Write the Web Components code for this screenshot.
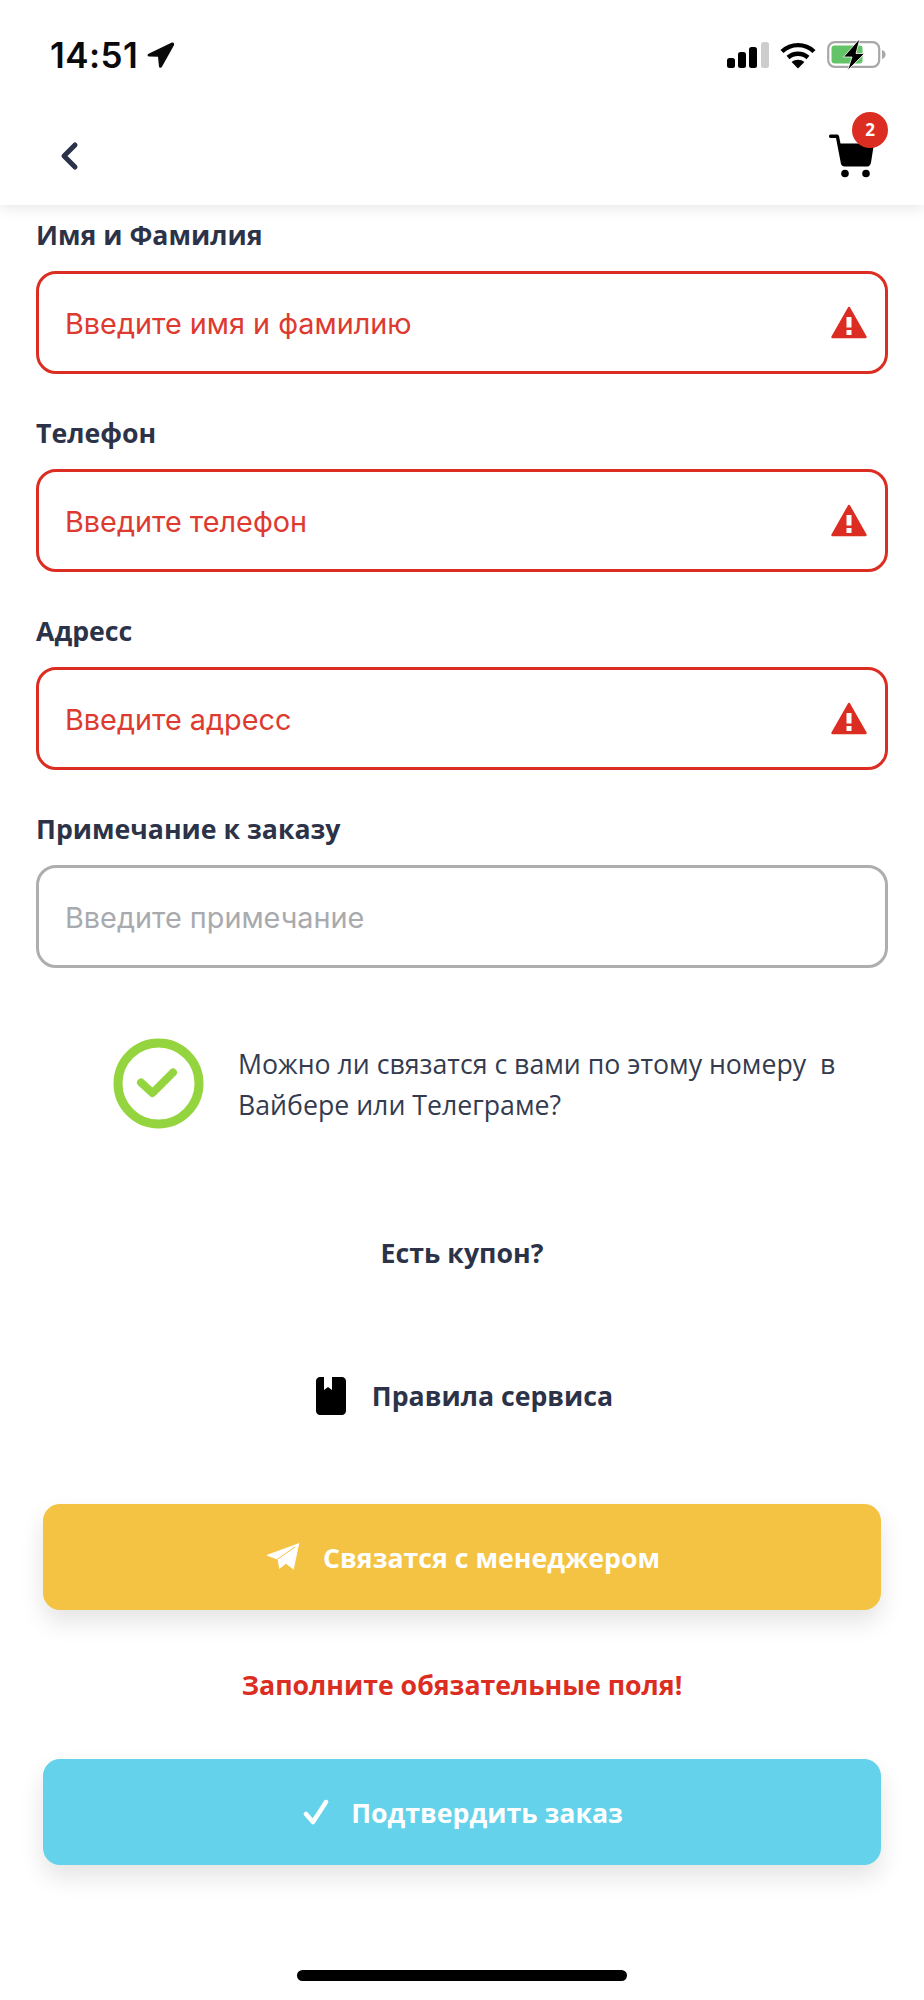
<!DOCTYPE html>
<html lang="ru">
<head>
<meta charset="utf-8">
<title>Заказ</title>
<style>
  html, body { margin: 0; background: #fff; }
  body { font-family: "Open Sans", sans-serif; color: #2c3349; }
  main { display: block; padding: 12px 36px 0; }
</style>
</head>
<body>
<app-header count="2"></app-header>
<main>
  <form-field label="Имя и Фамилия" text="Введите имя и фамилию" error></form-field>
  <form-field label="Телефон" text="Введите телефон" error></form-field>
  <form-field label="Адресс" text="Введите адресс" error></form-field>
  <form-field label="Примечание к заказу" text="Введите примечание"></form-field>
  <consent-row>Можно ли связатся с вами по этому номеру&nbsp; в Вайбере или Телеграме?</consent-row>
  <link-row class="coupon">Есть купон?</link-row>
  <link-row class="rules" icon>Правила сервиса</link-row>
  <action-button class="first" color="#f4c344" icon="plane" gap="23">Связатся с менеджером</action-button>
  <form-error>Заполните обязательные поля!</form-error>
  <action-button color="#63d2ea" icon="check" gap="22">Подтвердить заказ</action-button>
</main>
<home-bar></home-bar>
<script>
class AppHeader extends HTMLElement {
  connectedCallback() {
    this.attachShadow({ mode: 'open' });
    this.shadowRoot.innerHTML = `
      <style>
        :host {
          display: block;
          height: 205px;
          background: #fff;
          box-shadow: 0 2px 14px rgba(0, 0, 0, .11);
          position: relative;
          z-index: 1;
        }
        .status {
          height: 110px;
          padding: 0 37px 0 50px;
          display: flex;
          align-items: center;
          justify-content: space-between;
        }
        .time {
          display: flex;
          align-items: center;
          gap: 8px;
          font: 600 35px Inter, sans-serif;
          color: #0a0a0a;
          letter-spacing: .4px;
        }
        .sys { display: flex; align-items: center; gap: 11px; }
        .nav {
          height: 92px;
          padding: 0 50px 0 60px;
          display: flex;
          align-items: center;
          justify-content: space-between;
        }
        .cart { position: relative; width: 46px; height: 46px; margin-top: -3px; }
        .badge {
          position: absolute;
          top: -20px;
          right: -14px;
          width: 36px;
          height: 36px;
          border-radius: 50%;
          background: #dc2d22;
          color: #fff;
          font: 700 17px/36px "Open Sans", sans-serif;
          text-align: center;
        }
        svg { display: block; overflow: visible; }
      </style>
      <div class="status">
        <div class="time">14:51
          <svg width="29" height="29" viewBox="0 0 28 28"><path d="M25 1.500 2.500 12.200c-1.600.8-1.200 2.700.5 2.800l8.600.3.9 9c.2 1.700 2.200 2 2.900.5L27 4c.7-1.600-.5-3.200-2-2.500z" fill="#0a0a0a"/></svg>
        </div>
        <div class="sys">
          <svg width="42" height="27" viewBox="0 0 42 27">
            <rect x="0" y="16" width="8" height="10" rx="2.500" fill="#000"/>
            <rect x="11" y="10" width="8" height="16" rx="2.500" fill="#000"/>
            <rect x="22" y="5" width="8" height="21" rx="2.500" fill="#000"/>
            <rect x="34" y="0" width="8" height="26" rx="2.500" fill="#cdcdcd"/>
          </svg>
          <svg width="36" height="27" viewBox="0 0 36 27" fill="none" stroke="#000" stroke-width="4.400">
            <path d="M2 9.500C11 1 25 1 34 9.500"/>
            <path d="M8 15.500c5.800-5 14.200-5 20 0"/>
            <path d="M18 26.500 11.600 20c3.600-3 9.200-3 12.800 0z" fill="#000" stroke="none"/>
          </svg>
          <svg width="60" height="30" viewBox="0 0 60 30">
            <rect x="1.200" y="2.200" width="51" height="24.600" rx="6.500" fill="none" stroke="#a8a8a8" stroke-width="2.200"/>
            <path d="M55 10c2.500.5 3.500 2.500 3.500 4.500S57.500 18.500 55 19z" fill="#a8a8a8"/>
            <rect x="4.500" y="5.500" width="31" height="18" rx="3" fill="#62c467"/>
            <path d="M31.500 0 16.500 17H25L20.500 30.500 37.500 13.500H29L32.500 0z" fill="#000" stroke="#fff" stroke-width=".8"/>
          </svg>
        </div>
      </div>
      <div class="nav">
        <svg width="18" height="28" viewBox="0 0 18 28"><path d="M15 3 4 14l11 11" fill="none" stroke="#2c3349" stroke-width="5" stroke-linecap="round" stroke-linejoin="round"/></svg>
        <div class="cart">
          <svg width="46" height="46" viewBox="0 0 46 46">
            <path d="M2.500 2.500h6.500c1 0 1.700.6 2 1.500l1.500 7.500H46l-3 19c-.3 2.200-1.700 4-3.600 4H16.500c-1.800 0-3.200-1.200-3.600-3L8 6H2.500c-2 0-2-3.500 0-3.500z" fill="#000"/>
            <circle cx="17" cy="41.500" r="3.800" fill="#000"/>
            <circle cx="38" cy="41.500" r="3.800" fill="#000"/>
          </svg>
          <div class="badge">${this.getAttribute('count')}</div>
        </div>
      </div>`;
  }
}
customElements.define('app-header', AppHeader);

class FormField extends HTMLElement {
  connectedCallback() {
    this.attachShadow({ mode: 'open' });
    const error = this.hasAttribute('error');
    this.shadowRoot.innerHTML = `
      <style>
        :host { display: block; margin-bottom: 41px; }
        .label {
          font-size: 26.700px;
          line-height: 36px;
          font-weight: 700;
          height: 36px;
          margin-bottom: 18px;
        }
        .box {
          height: 103px;
          box-sizing: border-box;
          border: 3px solid ${error ? '#dc2d22' : '#aeaeae'};
          border-radius: 20px;
          padding: 0 18px 0 26px;
          display: flex;
          align-items: center;
          justify-content: space-between;
          font-family: Inter, sans-serif;
          font-size: 28.800px;
          color: ${error ? '#dd3a30' : '#a9aaae'};
        }
        span { position: relative; top: 1px; }
        svg { display: block; }
      </style>
      <div class="label">${this.getAttribute('label')}</div>
      <div class="box">
        <span>${this.getAttribute('text')}</span>
        ${error ? `<svg width="36" height="33" viewBox="0 0 36 33">
          <path d="M18 2 34.500 31H1.500z" fill="#dc2d22" stroke="#dc2d22" stroke-width="2.500" stroke-linejoin="round"/>
          <rect x="15.500" y="11" width="5" height="10.500" fill="#fff"/>
          <rect x="15.500" y="24" width="5" height="5" fill="#fff"/>
        </svg>` : ''}
      </div>`;
  }
}
customElements.define('form-field', FormField);

class ConsentRow extends HTMLElement {
  connectedCallback() {
    this.attachShadow({ mode: 'open' });
    this.shadowRoot.innerHTML = `
      <style>
        :host {
          display: flex;
          align-items: center;
          gap: 34px;
          margin: 70px 0 0 77px;
          font-size: 26.700px;
          line-height: 41px;
          color: #343b4f;
        }
        svg { flex: none; display: block; }
        .txt { width: 620px; }
      </style>
      <svg width="91" height="91" viewBox="0 0 91 91" fill="none">
        <circle cx="45.500" cy="45.500" r="40.500" stroke="#94d53f" stroke-width="9"/>
        <path d="M28 44.500 39.500 55 60 34.500" stroke="#94d53f" stroke-width="8" stroke-linecap="round" stroke-linejoin="round"/>
      </svg>
      <div class="txt"><slot></slot></div>`;
  }
}
customElements.define('consent-row', ConsentRow);

class LinkRow extends HTMLElement {
  connectedCallback() {
    this.attachShadow({ mode: 'open' });
    const icon = this.hasAttribute('icon');
    this.shadowRoot.innerHTML = `
      <style>
        :host {
          display: flex;
          justify-content: center;
          align-items: center;
          gap: 26px;
          font-size: 26.700px;
          font-weight: 700;
          line-height: 40px;
        }
        :host(.coupon) { margin-top: 104px; }
        :host(.rules) { margin-top: 103px; padding-left: 5px; }
        svg { display: block; }
      </style>
      ${icon ? `<svg width="30" height="38" viewBox="0 0 30 38">
        <path d="M4 0h4v13l4-3 4 3V0h10c2.200 0 4 1.800 4 4v30c0 2.200-1.800 4-4 4H4c-2.200 0-4-1.800-4-4V4c0-2.200 1.800-4 4-4z" fill="#000"/>
      </svg>` : ''}
      <span><slot></slot></span>`;
  }
}
customElements.define('link-row', LinkRow);

const BUTTON_ICONS = {
  plane: `<svg width="34" height="28" viewBox="0 0 34 28"><path d="M33.300 0 0 12.300l11.700 4.400L13.300 26l6.700-5.300 7.700 6z" fill="#fff"/><path d="M11 16.500 29 4" stroke="#f4c344" stroke-width="1" fill="none"/></svg>`,
  check: `<svg width="26" height="26" viewBox="0 0 26 26"><path d="M3 15l7 8L23 3" fill="none" stroke="#fff" stroke-width="4.500" stroke-linecap="round" stroke-linejoin="round"/></svg>`
};

class ActionButton extends HTMLElement {
  connectedCallback() {
    this.attachShadow({ mode: 'open' });
    this.shadowRoot.innerHTML = `
      <style>
        :host {
          display: flex;
          align-items: center;
          justify-content: center;
          gap: ${this.getAttribute('gap')}px;
          height: 106px;
          margin: 0 7px;
          padding-left: 2px;
          border-radius: 17px;
          background: ${this.getAttribute('color')};
          color: #fff;
          font-size: 26.700px;
          font-weight: 700;
          box-shadow: 0 12px 24px rgba(0, 0, 0, .11);
        }
        :host(.first) { margin-top: 88px; }
        svg { display: block; }
      </style>
      ${BUTTON_ICONS[this.getAttribute('icon')]}
      <span><slot></slot></span>`;
  }
}
customElements.define('action-button', ActionButton);

class FormError extends HTMLElement {
  connectedCallback() {
    this.attachShadow({ mode: 'open' });
    this.shadowRoot.innerHTML = `
      <style>
        :host {
          display: block;
          text-align: center;
          color: #dc2d22;
          font-size: 26.700px;
          font-weight: 700;
          line-height: 149px;
        }
      </style>
      <slot></slot>`;
  }
}
customElements.define('form-error', FormError);

class HomeBar extends HTMLElement {
  connectedCallback() {
    this.attachShadow({ mode: 'open' });
    this.shadowRoot.innerHTML = `
      <style>
        :host { display: block; padding-top: 105px; }
        .bar { width: 330px; height: 11px; margin: 0 auto; background: #000; border-radius: 6px; }
      </style>
      <div class="bar"></div>`;
  }
}
customElements.define('home-bar', HomeBar);
</script>
</body>
</html>
